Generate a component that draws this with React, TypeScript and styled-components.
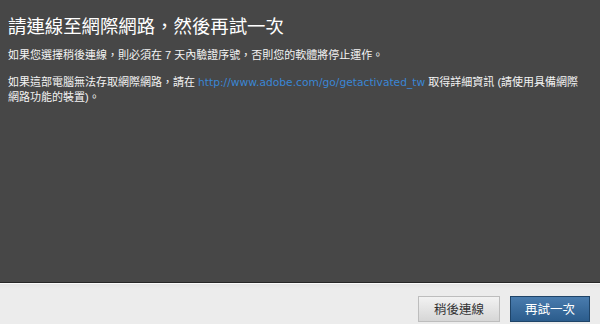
import React from "react"
import styled, { createGlobalStyle } from "styled-components"

const GlobalStyle = createGlobalStyle`
    html, body {
        margin: 0;
        padding: 0;
        background: #474747;
    }
    body {
        font-family: "Liberation Sans", "Noto Sans CJK TC", sans-serif;
    }
`

const Dialog = styled.div`
    display: flex;
    flex-direction: column;
    width: 600px;
    height: 324px;
    overflow: hidden;
`

const Content = styled.div`
    flex: 1;
    background: #474747;
    padding: 14px 12px 0 8px;
    color: #f4f4f4;
`

const Title = styled.h1`
    margin: 0;
    font-size: 18.4px;
    line-height: 26px;
    font-weight: normal;
    color: #ffffff;
`

const Paragraph = styled.p<{ $top: number }>`
    margin: ${(p) => p.$top}px 0 0;
    font-size: 11px;
    line-height: 14px;
`

const Link = styled.a`
    font-family: "DejaVu Sans", sans-serif;
    font-size: 10.7px;
    color: #3a86d4;
    text-decoration: none;
`

const Footer = styled.div`
    height: 41px;
    display: flex;
    justify-content: flex-end;
    align-items: center;
    gap: 10px;
    padding: 0 10px 0 0;
    background: linear-gradient(#e4e4e4 0, #ececec 6px, #ececec 100%);
    border-top: 1px solid #262626;
    box-shadow: inset 0 1px 0 #fafafa;
`

const Button = styled.button<{ $primary?: boolean }>`
    height: 26px;
    width: ${(p) => (p.$primary ? 80 : 82)}px;
    margin-top: 10px;
    font-family: "Noto Sans CJK TC", sans-serif;
    font-size: 12.5px;
    padding: 0;
    cursor: pointer;
    color: ${(p) => (p.$primary ? "#ffffff" : "#333333")};
    border: 1px solid ${(p) => (p.$primary ? "#1f4468" : "#bdbdbd")};
    background: ${(p) =>
        p.$primary
            ? "linear-gradient(#4a7cae, #2b5c8c)"
            : "linear-gradient(#f2f2f2, #d6d6d6)"};
`

export default function App() {
    return (
        <Dialog>
            <GlobalStyle />
            <Content>
                <Title>請連線至網際網路，然後再試一次</Title>
                <Paragraph $top={8}>
                    如果您選擇稍後連線，則必須在 7 天內驗證序號，否則您的軟體將停止運作。
                </Paragraph>
                <Paragraph $top={13}>
                    如果這部電腦無法存取網際網路，請在{" "}
                    <Link href="#">http://www.adobe.com/go/getactivated_tw</Link> 取得詳細資訊
                    (請使用具備網際網路功能的裝置)。
                </Paragraph>
            </Content>
            <Footer>
                <Button>稍後連線</Button>
                <Button $primary>再試一次</Button>
            </Footer>
        </Dialog>
    )
}
